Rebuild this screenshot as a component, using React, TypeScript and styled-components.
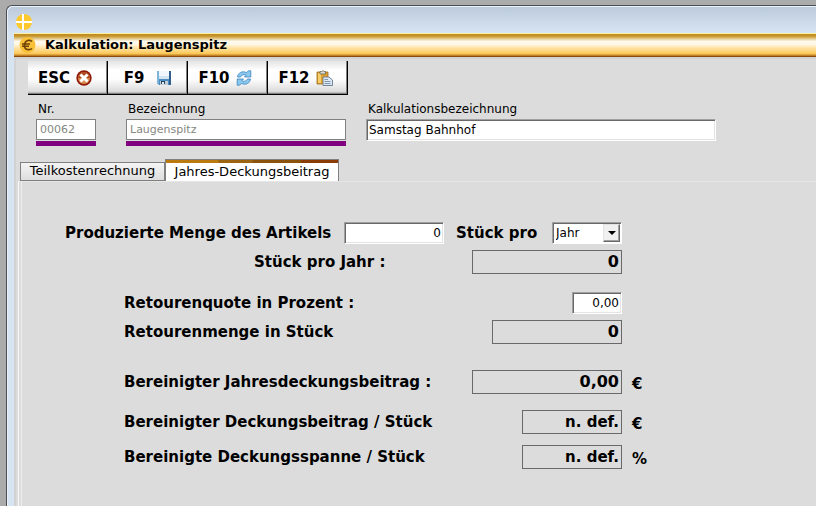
import React from "react";
import styled, { createGlobalStyle } from "styled-components";

const Global = createGlobalStyle`
  * { box-sizing: border-box; }
  html, body, #root { height: 100%; }
  body {
    margin: 0;
    background: #ababab;
    color: #000;
    font-family: "DejaVu Sans", Verdana, sans-serif;
    font-size: 12px;
    overflow: hidden;
  }
  input, select, button { font-family: inherit; color: inherit; margin: 0; border-radius: 0; }
`;

const Desktop = styled.div`
  height: 100%;
  padding: 5px 0 0 6px;
`;

const Window = styled.main`
  height: 100%;
  display: flex;
  flex-direction: column;
  border: solid #4a4d52;
  border-width: 1px 0 0 1px;
  border-top-left-radius: 6px;
  background: #d7e4f2;
  box-shadow: inset 1px 1px 0 #eaf1f8;
  padding-left: 7px;
`;

const Caption = styled.header`
  flex: none;
  height: 26px;
  margin-left: -6px;
  margin-top: 1px;
  padding: 7px 0 0 8px;
  border-top-left-radius: 5px;
  background: linear-gradient(#bccbdc, #d7e4f2);
  svg { display: block; }
`;

const GoldBar = styled.div`
  flex: none;
  height: 24px;
  display: flex;
  align-items: center;
  gap: 9px;
  padding-left: 5px;
  border-top: 1px solid #fff0a0;
  border-bottom: 1px solid #8a4b08;
  background: linear-gradient(#bd8a1c 0, #c8962c 10%, #ead6a4 24%, #fffaf0 34%, #fff6e2 48%, #ffe6b0 60%, #fdd273 80%, #fbc654 90%, #c88a2c 96%, #b87820 100%);
`;

const Heading = styled.h1`
  margin: 0;
  font-size: 13px;
  line-height: 16px;
  font-weight: bold;
`;

const Body = styled.div`
  flex: 1;
  min-height: 0;
  display: flex;
  flex-direction: column;
  background: #dcdcdc;
  border: solid #d2d2d2;
  border-width: 2px 0 0 2px;
`;

const Toolbar = styled.div`
  display: flex;
  padding: 2px 0 0 12px;
`;

const KeyButton = styled.button`
  width: 80px;
  height: 34px;
  display: flex;
  align-items: center;
  gap: 6px;
  padding: 0 0 0 10px;
  border: solid #000;
  border-width: 0 1px 1px 0;
  background: linear-gradient(#e4e4e4, #ffffff 28%, #fdfdfd 55%, #dcdcdc 92%, #b0b0b0 97%);
  box-shadow: inset -1px -1px 0 #808080;
  font-size: 15px;
  font-weight: bold;
  svg { flex: none; }
`;

const KeyName = styled.span`
  width: 32px;
  display: flex;
  justify-content: center;
`;

const Header = styled.section`
  display: flex;
  padding: 6px 0 0 20px;
`;

const Field = styled.label<{ $width: number; $gap?: number }>`
  display: flex;
  flex-direction: column;
  width: ${(p) => p.$width}px;
  margin-right: ${(p) => p.$gap ?? 0}px;
  line-height: 16px;
  span { padding: 0 0 2px 2px; }
`;

const LockedInput = styled.input`
  width: 100%;
  height: 21px;
  padding: 0 3px;
  border: 1px solid #808080;
  background: #fff;
  font-size: 11px;
  &:disabled { color: #848880; }
`;

const Underline = styled.i`
  height: 5px;
  margin-top: 1px;
  background: #800080;
`;

const SunkenInput = styled.input<{ $width?: number }>`
  flex: none;
  width: ${(p) => (p.$width ? p.$width + "px" : "100%")};
  height: 22px;
  padding: 0 2px;
  border: 1px solid;
  border-color: #a0a0a0 #fff #fff #a0a0a0;
  box-shadow: inset 1px 1px 0 #696969, inset -1px -1px 0 #e3e3e3;
  background: #fff;
  font-size: 12px;
  text-align: ${(p) => (p.$width ? "right" : "left")};
`;

const Tabs = styled.div`
  display: flex;
  align-items: flex-end;
  height: 22px;
  margin: 13px 0 0 4px;
`;

const Tab = styled.button<{ $active?: boolean }>`
  position: relative;
  width: ${(p) => (p.$active ? 174 : 145)}px;
  height: ${(p) => (p.$active ? 22 : 19)}px;
  padding: ${(p) => (p.$active ? "2px 0 0" : "0 0 1px")};
  border: 1px solid #808080;
  border-bottom-width: ${(p) => (p.$active ? 0 : 1)}px;
  background: ${(p) => (p.$active ? "#fff" : "linear-gradient(#f4f4f4, #dedede)")};
  font-size: 13px;
  line-height: 16px;
  white-space: nowrap;
  &::before {
    content: "";
    display: ${(p) => (p.$active ? "block" : "none")};
    position: absolute;
    inset: 0 0 auto 0;
    height: 3px;
    background: linear-gradient(90deg, #bb7a10 30%, #9c6410 31% 50%, #8a520a 51% 78%, #8a3c04 79%);
  }
`;

const Panel = styled.section`
  flex: 1;
  margin-left: 2px;
  padding: 39px 0 0 46px;
  border: solid #e6e6e6;
  border-left-color: #f8f8f8;
  border-width: 1px 0 0 1px;
  box-shadow: inset 2px 0 0 #dcdcdc, inset 3px 0 0 #ececec;
`;

const Row = styled.div<{ $after: number }>`
  display: flex;
  align-items: center;
  height: 24px;
  margin-bottom: ${(p) => p.$after}px;
  font-size: 15px;
  font-weight: bold;
  white-space: nowrap;
`;

const Cells = styled.div<{ $indent?: number }>`
  flex: none;
  display: flex;
  align-items: center;
  width: 557px;
  padding-left: ${(p) => p.$indent ?? 0}px;
  > :last-child { margin-left: auto; }
`;

const RowLabel = styled.label<{ $width?: number }>`
  width: ${(p) => (p.$width ? p.$width + "px" : "auto")};
`;

const Between = styled.label`
  margin-left: 12px;
`;

const Result = styled.output<{ $width: number; $large?: boolean }>`
  width: ${(p) => p.$width}px;
  height: 24px;
  padding-right: 2px;
  border: 1px solid #696969;
  font-size: ${(p) => (p.$large ? 16 : 15)}px;
  line-height: 22px;
  text-align: right;
`;

const Unit = styled.span`
  margin-left: 10px;
  padding-top: 3px;
`;

const SelectBox = styled.span`
  position: relative;
  display: flex;
  width: 70px;
  height: 22px;
  border: 1px solid;
  border-color: #a0a0a0 #fff #fff #a0a0a0;
  background: #fff;
  box-shadow: inset 1px 1px 0 #696969;
  select {
    width: 100%;
    appearance: none;
    border: 0;
    padding: 0 0 0 3px;
    background: transparent;
    font-size: 12px;
    outline: none;
  }
`;

const DropArrow = styled.span`
  position: absolute;
  top: 1px;
  right: 1px;
  width: 17px;
  height: 18px;
  display: grid;
  place-items: center;
  pointer-events: none;
  background: #f0f0f0;
  border: 1px solid;
  border-color: #e3e3e3 #696969 #696969 #e3e3e3;
  box-shadow: inset -1px -1px 0 #a0a0a0;
  &::before {
    content: "";
    border: solid transparent;
    border-width: 4px 4px 0;
    border-top-color: #000;
  }
`;

const CloseIcon = () => (
  <svg width="16" height="16" viewBox="0 0 16 16" aria-hidden="true">
    <circle cx="8" cy="8" r="7.7" fill="#8f1c08" />
    <circle cx="8" cy="8" r="6" fill="#d88c50" />
    <path d="M8 2a6 6 0 0 1 6 6H2a6 6 0 0 1 6-6z" fill="#b04820" />
    <path d="M5.500 5.500l5 5M10.500 5.500l-5 5" stroke="#fff" strokeWidth="3" strokeLinecap="square" />
  </svg>
);

const SaveIcon = () => (
  <svg width="16" height="16" viewBox="0 0 16 16" aria-hidden="true">
    <path d="M1 1h14v14H3l-2-2z" fill="#4a8cc0" />
    <path d="M1 1h2v13l-2-1z" fill="#7db4dc" />
    <path d="M3 1h10v8H3z" fill="#f0f7fc" />
    <path d="M3 6h10v3H3z" fill="#d0e4f2" />
    <path d="M4 11h8v4H4z" fill="#c4ccd4" />
    <path d="M5 11h4v3H5z" fill="#24445f" />
    <path d="M6 12h2v2H6z" fill="#e8eef2" />
    <path d="M13 1h2v14h-2z" fill="#2d608f" />
  </svg>
);

const RefreshIcon = () => (
  <svg width="16" height="16" viewBox="0 0 16 16" aria-hidden="true">
    <path d="M1.500 7C2 3 6 .5 10.500 2.500L12.500 .8 14.800 .8V7H8.500L10.200 5.200C7.500 4 5.500 5 4.500 7z" fill="#8cc8ee" stroke="#3684bc" strokeWidth=".8" />
    <path d="M14.500 9C14 13 10 15.500 5.500 13.500L3.500 15.200 1.200 15.200V9H7.500L5.800 10.800C8.500 12 10.500 11 11.500 9z" fill="#8cc8ee" stroke="#3684bc" strokeWidth=".8" />
  </svg>
);

const PasteIcon = () => (
  <svg width="17" height="16" viewBox="0 0 17 16" aria-hidden="true">
    <path d="M1 2h11v12H1z" fill="#dca030" stroke="#9a6a1c" strokeWidth=".8" />
    <path d="M2 3h3v10H2z" fill="#f6cf6c" />
    <path d="M4 3V1.500h1.500a1.500 1.500 0 0 1 2.500 0H9.500V4H4z" fill="#d8d8d0" stroke="#6e6a58" strokeWidth=".8" />
    <path d="M7 7h6l3.500 3v5.500H7z" fill="#dce8f4" stroke="#66788c" strokeWidth=".9" />
    <path d="M8.500 9.500H12M8.500 11.500h6M8.500 13.500h6" stroke="#8297b0" />
  </svg>
);

const AppIcon = () => (
  <svg width="16" height="16" viewBox="0 0 16 16" aria-hidden="true">
    <circle cx="8" cy="8" r="8" fill="#fdc92e" />
    <path d="M7 0v16M0 8h16" stroke="#fff" strokeWidth="2" />
  </svg>
);

const EuroIcon = () => (
  <svg width="17" height="16" viewBox="0 0 17 16" aria-hidden="true">
    <circle cx="8.500" cy="8" r="8" fill="#f9c137" />
    <path d="M13 4.500C11 2.800 6 2.500 5.500 8S11 13.200 13 11.500M3 7h8M3 9.200h7" fill="none" stroke="#6e4208" strokeWidth="1.600" />
  </svg>
);

const keys = [
  { name: "ESC", icon: <CloseIcon /> },
  { name: "F9", icon: <SaveIcon /> },
  { name: "F10", icon: <RefreshIcon /> },
  { name: "F12", icon: <PasteIcon /> },
];

const results = [
  { id: "jdb", label: "Bereinigter Jahresdeckungsbeitrag :", width: 150, value: "0,00", large: true, unit: "€", after: 16 },
  { id: "dbs", label: "Bereinigter Deckungsbeitrag / Stück", width: 100, value: "n. def.", large: false, unit: "€", after: 11 },
  { id: "dss", label: "Bereinigte Deckungsspanne / Stück", width: 100, value: "n. def.", large: false, unit: "%", after: 0 },
];

export default function App() {
  return (
    <Desktop>
      <Global />
      <Window>
        <Caption><AppIcon /></Caption>
        <GoldBar>
          <EuroIcon />
          <Heading>Kalkulation: Laugenspitz</Heading>
        </GoldBar>
        <Body>
          <Toolbar>
            {keys.map((k) => (
              <KeyButton key={k.name} type="button"><KeyName>{k.name}</KeyName>{k.icon}</KeyButton>
            ))}
          </Toolbar>
          <Header>
            <Field $width={60} $gap={30}>
              <span>Nr.</span>
              <LockedInput disabled defaultValue="00062" />
              <Underline />
            </Field>
            <Field $width={220} $gap={20}>
              <span>Bezeichnung</span>
              <LockedInput disabled defaultValue="Laugenspitz" />
              <Underline />
            </Field>
            <Field $width={350}>
              <span>Kalkulationsbezeichnung</span>
              <SunkenInput defaultValue="Samstag Bahnhof" />
            </Field>
          </Header>
          <Tabs role="tablist">
            <Tab type="button" role="tab" aria-selected={false}>Teilkostenrechnung</Tab>
            <Tab type="button" role="tab" aria-selected $active>Jahres-Deckungsbeitrag</Tab>
          </Tabs>
          <Panel role="tabpanel">
            <Row $after={5}>
              <Cells>
                <RowLabel htmlFor="menge" $width={279}>Produzierte Menge des Artikels</RowLabel>
                <SunkenInput id="menge" $width={100} defaultValue="0" />
                <Between htmlFor="einheit">Stück pro</Between>
                <SelectBox>
                  <select id="einheit" defaultValue="Jahr">
                    <option>Jahr</option>
                    <option>Monat</option>
                  </select>
                  <DropArrow />
                </SelectBox>
              </Cells>
            </Row>
            <Row $after={17}>
              <Cells $indent={189}>
                <RowLabel htmlFor="stueck">Stück pro Jahr :</RowLabel>
                <Result id="stueck" $width={150} $large>0</Result>
              </Cells>
            </Row>
            <Row $after={5}>
              <Cells $indent={59}>
                <RowLabel htmlFor="quote">Retourenquote in Prozent :</RowLabel>
                <SunkenInput id="quote" $width={50} defaultValue="0,00" />
              </Cells>
            </Row>
            <Row $after={26}>
              <Cells $indent={59}>
                <RowLabel htmlFor="retouren">Retourenmenge in Stück</RowLabel>
                <Result id="retouren" $width={130} $large>0</Result>
              </Cells>
            </Row>
            {results.map((r) => (
              <Row key={r.id} $after={r.after}>
                <Cells $indent={59}>
                  <RowLabel htmlFor={r.id}>{r.label}</RowLabel>
                  <Result id={r.id} $width={r.width} $large={r.large}>{r.value}</Result>
                </Cells>
                <Unit>{r.unit}</Unit>
              </Row>
            ))}
          </Panel>
        </Body>
      </Window>
    </Desktop>
  );
}
